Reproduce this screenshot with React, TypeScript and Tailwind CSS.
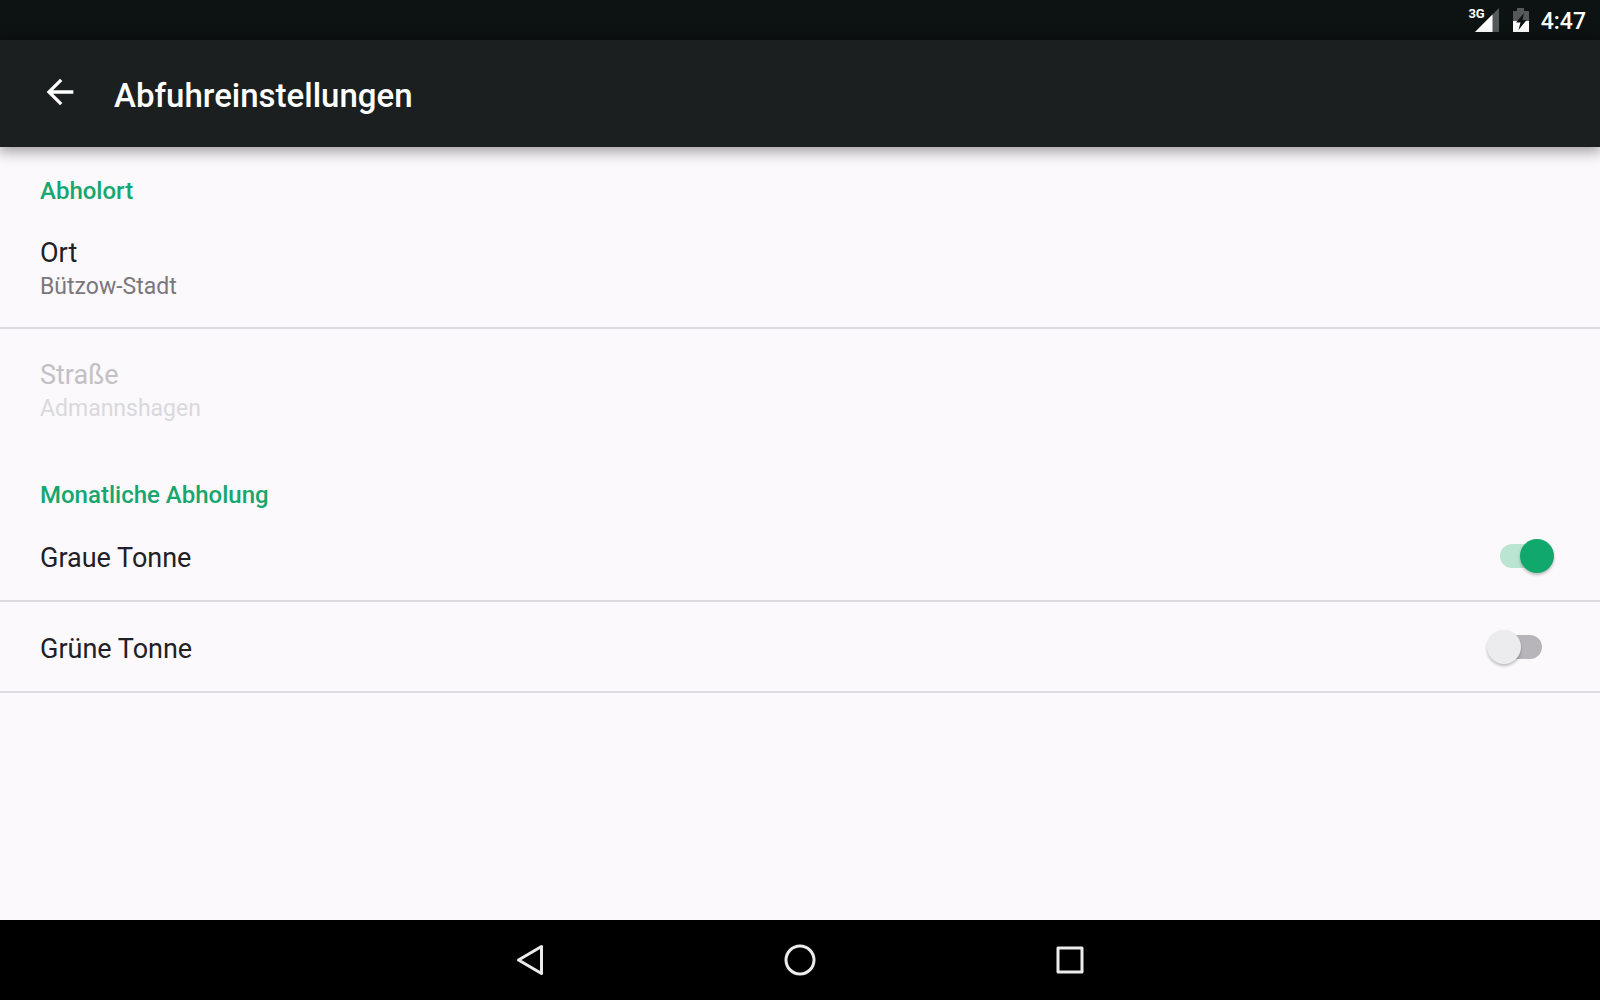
import { useState } from "react";

const places = [
  { title: "Ort", summary: "Bützow-Stadt", disabled: false },
  { title: "Straße", summary: "Admannshagen", disabled: true },
];

const bins = [
  { id: "graue-tonne", label: "Graue Tonne" },
  { id: "gruene-tonne", label: "Grüne Tonne" },
];

function StatusBar() {
  return (
    <div className="flex h-10 items-center justify-end bg-[#0d1212] pr-[14px] text-white">
      <span className="-mr-[10px] mb-3 text-[13px] leading-4 font-bold">3G</span>
      <svg width="24" height="24" viewBox="0 0 24 24" aria-hidden="true">
        <path d="M24 0v24H0z" fill="#555959" />
        <path d="M17.500 6.500V24H0z" fill="#fff" />
      </svg>
      <svg className="ml-[13px] mr-[11px]" width="18" height="24" viewBox="0 0 18 24" aria-hidden="true">
        <path d="M5 0h7v3h5v10H1V3h4z" fill="#555959" />
        <path d="M1 13h16v11H1z" fill="#fff" />
        <path d="M12 5 4 14.500h4.500L6.500 22l8-10h-4z" fill="#0d1212" />
      </svg>
      <span className="pt-1 text-[23px] leading-7 font-medium">4:47</span>
    </div>
  );
}

function SectionTitle({ children }: { children: string }) {
  return <h2 className="px-10 pt-[31px] pb-[3px] text-[24px] leading-[26px] font-medium text-[#16a66e]">{children}</h2>;
}

export default function App() {
  const [enabled, setEnabled] = useState<Record<string, boolean>>({ "graue-tonne": true });

  return (
    <div className="flex min-h-screen flex-col bg-[#fbf9fc] font-[Roboto,sans-serif]">
      <StatusBar />
      <header className="relative flex h-[107px] items-center bg-[#1b1f20] pl-10 text-white shadow-[0_2px_14px_2px_rgba(0,0,0,0.4)]">
        <button type="button" aria-label="Zurück" className="mb-1 flex size-10 items-center justify-center">
          <svg width="40" height="40" viewBox="0 0 24 24" fill="currentColor" aria-hidden="true">
            <path d="M20 11H7.830l5.590-5.590L12 4l-8 8 8 8 1.410-1.410L7.830 13H20z" />
          </svg>
        </button>
        <h1 className="ml-[34px] pt-1 text-[33px] leading-10 font-medium">Abfuhreinstellungen</h1>
      </header>

      <main className="flex-1">
        <section>
          <SectionTitle>Abholort</SectionTitle>
          {places.map((place) => (
            <button
              key={place.title}
              type="button"
              disabled={place.disabled}
              className="flex h-[122px] w-full flex-col justify-center border-b-2 border-[#dddbdf] px-10 pt-2 text-left text-[#212024] disabled:border-transparent disabled:text-[#c3c1c5]"
            >
              <span className="text-[27px] leading-8">{place.title}</span>
              <span className={`text-[23px] leading-9 ${place.disabled ? "text-[#dad8dc]" : "text-[#79777b]"}`}>{place.summary}</span>
            </button>
          ))}
        </section>

        <section>
          <SectionTitle>Monatliche Abholung</SectionTitle>
          {bins.map((bin) => (
            <div key={bin.id} className="flex h-[91px] items-center justify-between border-b-2 border-[#dddbdf] pl-10 pr-[58px]">
              <label htmlFor={bin.id} className="pt-1 text-[27px] leading-8 text-[#212024]">{bin.label}</label>
              <input
                id={bin.id}
                type="checkbox"
                role="switch"
                checked={!!enabled[bin.id]}
                onChange={(e) => setEnabled({ ...enabled, [bin.id]: e.target.checked })}
                className="relative h-6 w-[42px] appearance-none rounded-full bg-[#b7b5b9] before:absolute before:-top-[5px] before:-left-[13px] before:size-[34px] before:rounded-full before:bg-[#ececee] before:shadow-[0_2px_3px_rgba(0,0,0,0.25)] before:transition-transform checked:bg-[#b9e5d2] checked:before:translate-x-[33px] checked:before:bg-[#10a86b]"
              />
            </div>
          ))}
        </section>
      </main>

      <nav className="flex h-20 items-center justify-center gap-[230px] bg-black text-[#ececec]">
        <button type="button" aria-label="Zurück" className="size-10">
          <svg width="40" height="40" viewBox="0 0 40 40" fill="none" stroke="currentColor" strokeWidth="3" strokeLinejoin="round" aria-hidden="true">
            <path d="M8.500 20 31.500 6.500v27z" />
          </svg>
        </button>
        <button type="button" aria-label="Startseite" className="size-10">
          <svg width="40" height="40" viewBox="0 0 40 40" fill="none" stroke="currentColor" strokeWidth="3" aria-hidden="true">
            <circle cx="20" cy="20" r="14" />
          </svg>
        </button>
        <button type="button" aria-label="Übersicht" className="size-10">
          <svg width="40" height="40" viewBox="0 0 40 40" fill="none" stroke="currentColor" strokeWidth="3" strokeLinejoin="round" aria-hidden="true">
            <path d="M8 8h24v24H8z" />
          </svg>
        </button>
      </nav>
    </div>
  );
}
